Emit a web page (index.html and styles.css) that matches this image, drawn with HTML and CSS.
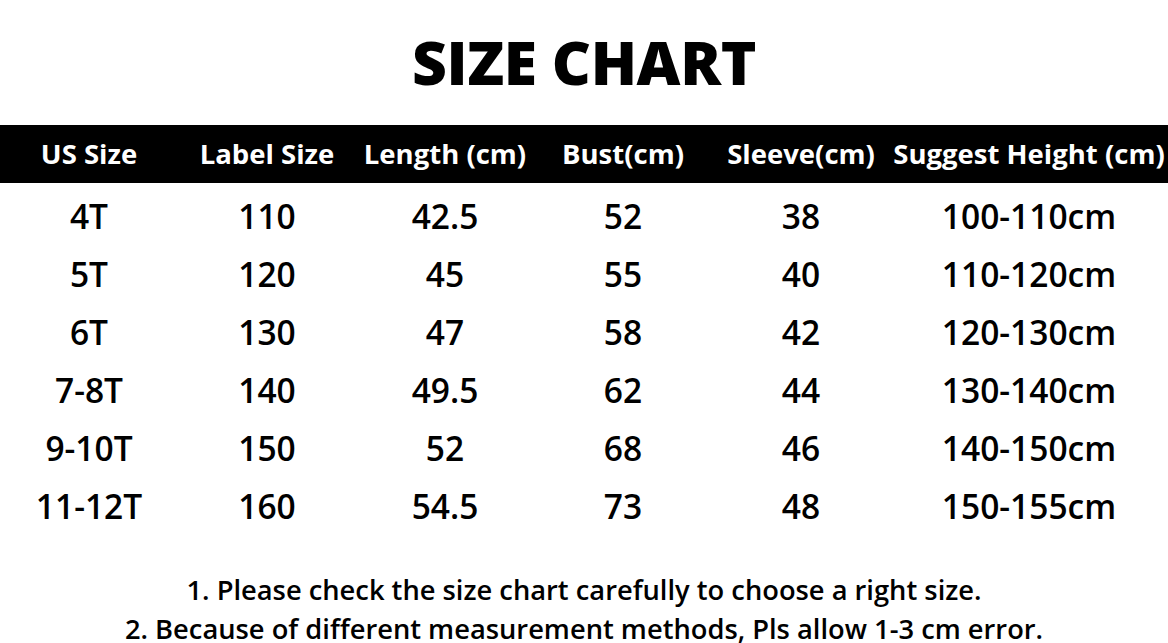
FILE: index.html
```html
<!DOCTYPE html>
<html lang="en">
<head>
<meta charset="utf-8">
<title>Size Chart</title>
<link rel="stylesheet" href="styles.css">
</head>
<body>
<div class="page">
  <h1 class="title">SIZE CHART</h1>
  <div class="chart">
    <div class="row head">
      <div class="cell">US Size</div>
      <div class="cell">Label Size</div>
      <div class="cell">Length (cm)</div>
      <div class="cell">Bust(cm)</div>
      <div class="cell">Sleeve(cm)</div>
      <div class="cell">Suggest Height (cm)</div>
    </div>
    <div class="row"><div class="cell">4T</div><div class="cell">110</div><div class="cell">42.5</div><div class="cell">52</div><div class="cell">38</div><div class="cell">100-110cm</div></div>
    <div class="row"><div class="cell">5T</div><div class="cell">120</div><div class="cell">45</div><div class="cell">55</div><div class="cell">40</div><div class="cell">110-120cm</div></div>
    <div class="row"><div class="cell">6T</div><div class="cell">130</div><div class="cell">47</div><div class="cell">58</div><div class="cell">42</div><div class="cell">120-130cm</div></div>
    <div class="row"><div class="cell">7-8T</div><div class="cell">140</div><div class="cell">49.5</div><div class="cell">62</div><div class="cell">44</div><div class="cell">130-140cm</div></div>
    <div class="row"><div class="cell">9-10T</div><div class="cell">150</div><div class="cell">52</div><div class="cell">68</div><div class="cell">46</div><div class="cell">140-150cm</div></div>
    <div class="row"><div class="cell">11-12T</div><div class="cell">160</div><div class="cell">54.5</div><div class="cell">73</div><div class="cell">48</div><div class="cell">150-155cm</div></div>
  </div>
  <div class="notes">
    <p>1. Please check the size chart carefully to choose a right size.</p>
    <p>2. Because of different measurement methods, Pls allow 1-3 cm error.</p>
  </div>
</div>
</body>
</html>
```

FILE: styles.css
```css
html, body {
  margin: 0;
  padding: 0;
  background: #ffffff;
}
body {
  width: 1168px;
  height: 643px;
  overflow: hidden;
  font-family: "Open Sans", "Noto Sans", sans-serif;
  color: #000000;
}
.page {
  display: flex;
  flex-direction: column;
}
.title {
  margin: 0;
  padding-top: 25px;
  height: 125px;
  box-sizing: border-box;
  text-align: center;
  font-size: 60.5px;
  font-weight: 800;
  line-height: 74px;
  letter-spacing: -0.4px;
}
.chart {
  display: flex;
  flex-direction: column;
}
.row {
  display: grid;
  grid-template-columns: 178px 178px 178px 178px 178px 278px;
  height: 58px;
  align-items: center;
}
.cell {
  text-align: center;
  font-size: 33.5px;
  font-weight: 600;
  line-height: 58px;
  white-space: nowrap;
  padding-top: 4px;
}
.head {
  background: #000000;
}
.head .cell {
  color: #ffffff;
  font-size: 27.5px;
  font-weight: 700;
  padding-top: 0;
}
.notes {
  padding-top: 39px;
  text-align: center;
}
.notes p {
  margin: 0;
  font-size: 27.3px;
  font-weight: 600;
  line-height: 39px;
}
```
